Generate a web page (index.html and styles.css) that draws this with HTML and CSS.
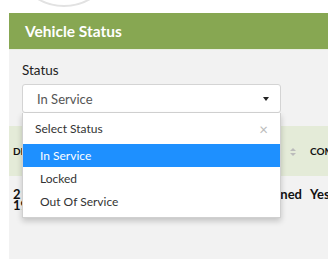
FILE: index.html
```html
<!DOCTYPE html>
<html lang="en">
<head>
  <meta charset="UTF-8" />
  <title>Vehicle Status</title>
  <link rel="stylesheet" href="styles.css">
</head>
<body>
  <!-- Avatar (cut off at top) -->
  <div class="avatar-wrap">
    <div class="avatar"></div>
  </div>

  <div class="panel">
    <div class="panel-heading">Vehicle Status</div>
    <div class="panel-body">
      <label class="field-label">Status</label>

      <div class="select-wrap">
        <div class="select">
          <span>In Service</span>
          <span class="caret"></span>
        </div>

        <!-- Open dropdown -->
        <div class="dropdown">
          <div class="dropdown-search">
            <span>Select Status</span>
            <span class="clear">&times;</span>
          </div>
          <ul class="options">
            <li class="active">In Service</li>
            <li>Locked</li>
            <li>Out Of Service</li>
          </ul>
        </div>
      </div>

      <div class="table">
        <div class="row head">
          <div class="cell">DIRECTORATE</div>
          <div class="cell sortable">STATUS <span class="sort"></span></div>
          <div class="cell">COMPLETE</div>
        </div>
        <div class="row">
          <div class="cell">2 Jan<br>1987</div>
          <div class="cell">Assigned</div>
          <div class="cell">Yes</div>
        </div>
      </div>
    </div>
  </div>
</body>
</html>
```

FILE: styles.css
```css
body {
  margin: 0;
  background: #fff;
  font-family: Lato, "Open Sans", sans-serif;
  color: #222;
  width: 328px;
  height: 259px;
  overflow: hidden;
}

.avatar-wrap {
  height: 13px;
  overflow: hidden;
}
.avatar {
  width: 100px;
  height: 100px;
  margin: -97px 0 0 12px;
  border: 2px solid #e2e2e2;
  border-radius: 50%;
}

.panel {
  margin-left: 9px;
  width: 319px;
  overflow: hidden;
}
.panel-heading {
  background: #87a752;
  color: #fff;
  font-weight: bold;
  font-size: 15.5px;
  height: 36px;
  line-height: 37px;
  padding-left: 16px;
}
.panel-body {
  background: #f2f2f2;
  border-top: 1px solid #e9eee2;
  height: 220px;
}

.field-label {
  display: block;
  padding: 12px 0 0 13px;
  font-size: 13.5px;
  color: #222;
  line-height: 16px;
}

.select-wrap {
  position: relative;
  margin: 6px 0 0 13px;
  width: 259px;
}
.select {
  display: flex;
  align-items: center;
  justify-content: space-between;
  height: 27px;
  padding: 0 11px 0 14px;
  background: #fff;
  border: 1px solid #d4d4d4;
  border-radius: 3px;
  font-size: 13px;
  color: #555;
}
.caret {
  width: 0;
  height: 0;
  border-left: 3px solid transparent;
  border-right: 3px solid transparent;
  border-top: 4px solid #222;
}

.dropdown {
  position: absolute;
  top: 29px;
  left: 0;
  width: 257px;
  background: #fff;
  border: 1px solid #d0d0d0;
  border-top: none;
  box-shadow: 0 3px 6px rgba(0, 0, 0, 0.2);
  z-index: 2;
}
.dropdown-search {
  display: flex;
  justify-content: space-between;
  align-items: center;
  height: 31px;
  padding: 0 12px;
  font-size: 12px;
  color: #333;
}
.clear {
  color: #bbb;
  font-size: 15px;
}
.options {
  list-style: none;
  margin: 0;
  padding: 0 0 4px;
}
.options li {
  height: 23px;
  line-height: 23px;
  padding-left: 17px;
  font-size: 12px;
  color: #333;
}
.options li.active {
  background: #1e90ff;
  color: #fff;
}

.table {
  margin-top: 13px;
}
.row {
  display: grid;
  grid-template-columns: 141px 156px 100px;
  font-weight: bold;
  font-size: 13px;
  color: #111;
}
.row.head {
  background: #e4ebd8;
  height: 50px;
  align-items: center;
  font-size: 10px;
}
.row .cell {
  padding: 0 4px;
  white-space: nowrap;
  overflow: hidden;
}
.row:not(.head) {
  padding-top: 13px;
  line-height: 11px;
}
.sortable {
  display: flex;
  justify-content: space-between;
  align-items: center;
}
.sort {
  width: 0;
  height: 0;
  border-left: 3px solid transparent;
  border-right: 3px solid transparent;
  border-bottom: 3px solid #bbb;
  position: relative;
  margin-right: 6px;
  margin-bottom: 4px;
}
.sort::after {
  content: "";
  position: absolute;
  left: -3px;
  top: 5px;
  border-left: 3px solid transparent;
  border-right: 3px solid transparent;
  border-top: 3px solid #bbb;
}
.row:not(.head) .cell:nth-child(2) {
  text-align: right;
  padding-right: 4px;
}
```
